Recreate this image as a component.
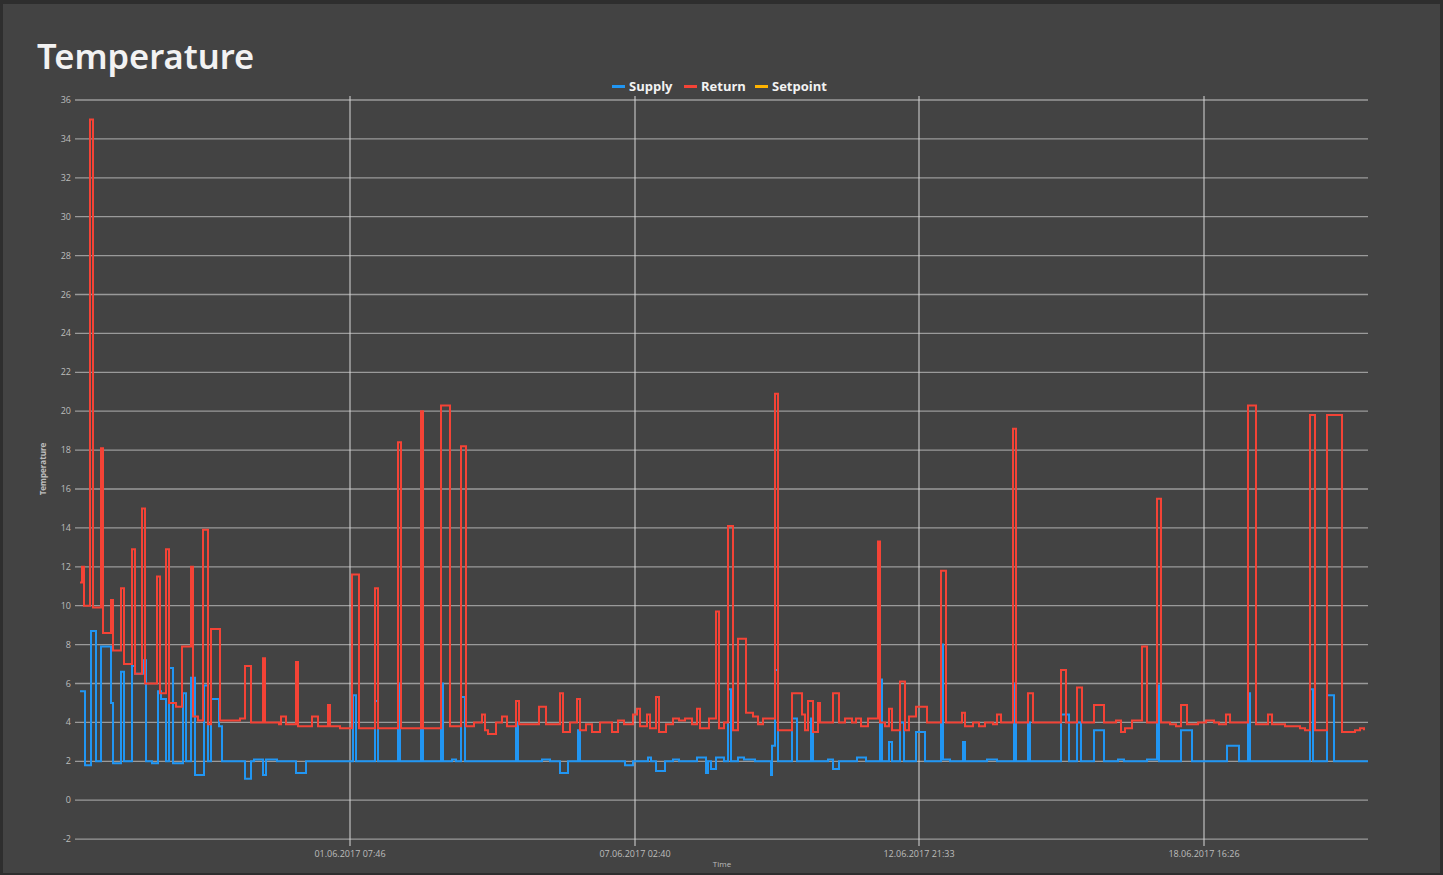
import React from "react";

// chart geometry (page pixels)
const X0 = 78;
const X1 = 1368;
const yOf = (v: number) => 100 + ((36 - v) / 2) * 38.9;

type Seg = [number, number]; // [x start, value]

const returnSegs: Seg[] = [
  [80, 11.2], [82, 12], [84, 10], [90, 35], [93, 9.9], [101, 18.1], [103, 8.6], [111, 10.3], [113, 7.7],
  [121, 10.9], [124, 7], [132, 12.9], [135, 6.5], [142, 15], [145, 6], [157, 11.5], [160, 5.5], [166, 12.9],
  [169, 5], [176, 4.8], [182, 7.9], [191, 12], [193, 4.3], [198, 4.1], [203, 13.9], [208, 3.9], [211, 8.8],
  [220, 4.1], [240, 4.2], [245, 6.9], [251, 4], [263, 7.3], [265, 4], [279, 3.9], [281, 4.3], [286, 3.9],
  [296, 7.1], [298, 3.8], [312, 4.3], [318, 3.8], [328, 4.9], [330, 3.8], [340, 3.7], [352, 11.6], [359, 3.7],
  [375, 10.9], [378, 3.7], [398, 18.4], [401, 3.7], [421, 20], [423, 3.7], [441, 20.3], [450, 3.8], [461, 18.2],
  [466, 3.8], [474, 4], [482, 4.4], [485, 3.6], [488, 3.4], [496, 4], [502, 4.3], [507, 3.8], [516, 5.1],
  [519, 3.9], [530, 3.9], [539, 4.8], [546, 3.9], [560, 5.5], [563, 3.5], [570, 4], [577, 5.2], [580, 3.6],
  [586, 3.9], [592, 3.5], [600, 4], [612, 3.5], [618, 4.1], [624, 3.9], [633, 4.4], [637, 4.7], [640, 3.8],
  [647, 4.4], [650, 3.7], [656, 5.3], [659, 3.5], [666, 3.9], [673, 4.2], [679, 4.1], [685, 4.2], [692, 3.9],
  [697, 4.7], [700, 3.7], [709, 4.2], [716, 9.7], [719, 3.7], [724, 4], [728, 14.1], [733, 3.6], [738, 8.3],
  [746, 4.5], [753, 4.3], [758, 3.9], [763, 4.2], [775, 20.9], [778, 3.6], [792, 5.5], [802, 4.4], [805, 3.6],
  [808, 5.1], [813, 3.5], [818, 5], [820, 4], [833, 5.5], [839, 4], [845, 4.2], [852, 4], [856, 4.2], [861, 3.8],
  [868, 4.2], [878, 13.3], [880, 4], [885, 3.8], [889, 4.7], [892, 3.6], [900, 6.1], [905, 3.6], [909, 4.3],
  [916, 4.8], [927, 4], [935, 4], [941, 11.8], [946, 4], [954, 4], [962, 4.5], [965, 3.8], [973, 4], [979, 3.8],
  [985, 4], [993, 3.9], [997, 4.4], [1001, 4], [1013, 19.1], [1016, 4], [1028, 5.5], [1033, 4], [1042, 4],
  [1051, 4], [1061, 6.7], [1066, 4], [1077, 5.8], [1082, 4], [1090, 4], [1094, 4.9], [1104, 4], [1116, 4.1],
  [1121, 3.5], [1125, 3.7], [1132, 4.1], [1142, 7.9], [1147, 4], [1157, 15.5], [1161, 4], [1170, 3.9],
  [1176, 3.8], [1181, 4.9], [1187, 3.9], [1198, 4], [1206, 4.1], [1214, 4], [1219, 3.9], [1226, 4.4],
  [1230, 4], [1240, 4], [1248, 20.3], [1256, 3.9], [1268, 4.4], [1272, 3.9], [1285, 3.8], [1293, 3.8],
  [1300, 3.7], [1305, 3.6], [1310, 19.8], [1315, 3.6], [1327, 19.8], [1342, 3.5], [1355, 3.6], [1360, 3.7], [1364, 3.6],
];

const supplySegs: Seg[] = [
  [80, 5.6], [85, 1.8], [91, 8.7], [96, 2], [101, 7.9], [111, 5], [113, 1.9], [121, 6.6], [124, 2], [132, 6.9],
  [135, 6.5], [143, 7.2], [146, 2], [152, 1.9], [158, 5.6], [161, 5.2], [166, 2], [169, 6.8], [173, 1.9],
  [183, 5.5], [186, 2], [191, 6.3], [195, 1.3], [204, 5.9], [208, 2], [211, 5.2], [219, 3.8], [222, 2],
  [245, 1.1], [251, 2], [254, 2.1], [263, 1.3], [266, 2.1], [277, 2], [296, 1.4], [306, 2], [353, 5.4],
  [356, 2], [375, 5.1], [378, 2], [398, 6], [400, 2], [421, 6], [423, 2], [441, 6], [443, 2], [452, 2.1],
  [456, 2], [461, 5.3], [465, 2], [516, 4], [518, 2], [542, 2.1], [550, 2], [560, 1.4], [568, 2], [578, 3.6],
  [580, 2], [625, 1.8], [633, 2], [648, 2.2], [651, 2], [656, 1.5], [665, 2], [673, 2.1], [679, 2], [697, 2.2],
  [706, 1.4], [708, 2], [711, 1.6], [716, 2.2], [724, 2], [728, 5.7], [731, 2], [738, 2.2], [744, 2.1],
  [755, 2], [771, 1.3], [772, 2.8], [775, 6.7], [778, 2], [792, 4.2], [797, 2], [811, 4.2], [813, 2],
  [828, 2.1], [833, 1.6], [839, 2], [857, 2.2], [866, 2], [880, 6.2], [882, 2], [889, 3], [892, 2], [900, 4],
  [904, 2], [916, 3.5], [925, 2], [941, 8], [943, 2.1], [950, 2], [963, 3], [965, 2], [987, 2.1], [997, 2],
  [1014, 6], [1016, 2], [1028, 4], [1030, 2], [1061, 4.4], [1069, 2], [1077, 4], [1081, 2], [1094, 3.6],
  [1104, 2], [1118, 2.1], [1124, 2], [1147, 2.1], [1157, 5.9], [1159, 2], [1181, 3.6], [1192, 2],
  [1227, 2.8], [1239, 2], [1248, 5.5], [1250, 2], [1310, 5.7], [1313, 2], [1327, 5.4], [1334, 2], [1368, 2],
];

const stepPath = (segs: Seg[]) => {
  let d = `M${segs[0][0]},${yOf(segs[0][1]).toFixed(1)}`;
  for (let i = 1; i < segs.length; i++) {
    d += ` H${segs[i][0]} V${yOf(segs[i][1]).toFixed(1)}`;
  }
  return d;
};

const yTicks = Array.from({ length: 20 }, (_, i) => 36 - i * 2);
const xTicks = [
  { x: 350, label: "01.06.2017 07:46" },
  { x: 635, label: "07.06.2017 02:40" },
  { x: 919, label: "12.06.2017 21:33" },
  { x: 1204, label: "18.06.2017 16:26" },
];

const Chart = () => (
  <svg viewBox="3 78 1437 792" className="block w-full h-[792px]" style={{ fontFamily: "'Open Sans', sans-serif" }}>
    {/* legend */}
    <g fontSize="13" fontWeight="700" fill="#f2f2f2">
      <rect x="612" y="85" width="13" height="3" fill="#2196f3" />
      <text x="629" y="91">Supply</text>
      <rect x="684" y="85" width="13" height="3" fill="#f44336" />
      <text x="701" y="91">Return</text>
      <rect x="755" y="85" width="13" height="3" fill="#ffb300" />
      <text x="772" y="91">Setpoint</text>
    </g>
    {yTicks.map((v) => (
      <g key={v}>
        <line x1={X0 - 3} x2={X1} y1={yOf(v)} y2={yOf(v)} stroke="#9a9a9a" strokeWidth="1.3" />
        <text x={X0 - 7} y={yOf(v) + 3} fontSize="9" fill="#bdbdbd" textAnchor="end">{v}</text>
      </g>
    ))}
    {xTicks.map((t) => (
      <g key={t.x}>
        <line x1={t.x} x2={t.x} y1={96} y2={846} stroke="#d8d8d8" strokeWidth="1" />
        <text x={t.x} y={857} fontSize="9" fill="#bdbdbd" textAnchor="middle">{t.label}</text>
      </g>
    ))}
    <text x="722" y="867" fontSize="8" fill="#bdbdbd" textAnchor="middle">Time</text>
    <text transform="translate(46 469) rotate(-90)" fontSize="8" fontWeight="700" fill="#bdbdbd" textAnchor="middle">Temperature</text>
    <path d={stepPath(supplySegs)} fill="none" stroke="#2196f3" strokeWidth="2" />
    <path d={stepPath(returnSegs)} fill="none" stroke="#f44336" strokeWidth="2" />
  </svg>
);

export default function App() {
  return (
    <div className="w-[1443px] h-[875px] bg-[#2e2e2e] pl-[3px] pt-[4px] pr-[3px] pb-[2px]">
      <div className="h-full bg-[#434343] overflow-hidden">
        <h1 className="pl-[34px] pt-[32px] h-[74px] text-[34.5px] leading-[40px] font-semibold text-[#f2f2f2] font-['Open_Sans',sans-serif]">
          Temperature
        </h1>
        <Chart />
      </div>
    </div>
  );
}
